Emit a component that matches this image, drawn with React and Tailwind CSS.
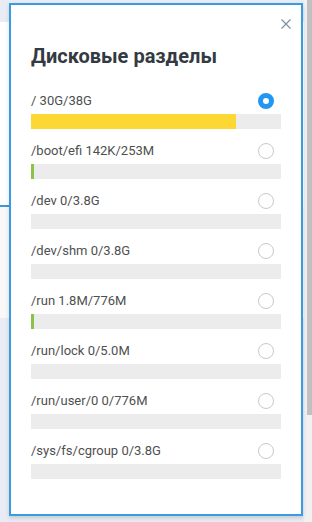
import React from 'react';

const PARTS = [
  { name: '/ 30G/38G', fill: '82%', color: 'bg-[#fdd835]', checked: true },
  { name: '/boot/efi 142K/253M', fill: '3px', color: 'bg-[#8bc34a]' },
  { name: '/dev 0/3.8G', fill: '0' },
  { name: '/dev/shm 0/3.8G', fill: '0' },
  { name: '/run 1.8M/776M', fill: '3px', color: 'bg-[#8bc34a]' },
  { name: '/run/lock 0/5.0M', fill: '0' },
  { name: '/run/user/0 0/776M', fill: '0' },
  { name: '/sys/fs/cgroup 0/3.8G', fill: '0' }
];

// строка раздела
const PartRow = ({ part }) => (
  <div className="mb-[14px]">
    <div className="flex items-center h-4">
      <span className="flex-1 text-[13px] leading-4 text-[#4f4f4f]">{part.name}</span>
      {part.checked ? (
        <span className="w-4 h-4 mr-[7px] rounded-full border-[5px] border-[#2196f3] bg-white" />
      ) : (
        <span className="w-4 h-4 mr-[7px] rounded-full border border-[#c9c9c9] bg-white" />
      )}
    </div>
    <div className="mt-[5px] h-[15px] bg-[#ececec]">
      {part.color && <div className={`h-full ${part.color}`} style={{ width: part.fill }} />}
    </div>
  </div>
);

export default function App() {
  return (
    <div className="relative w-[312px] h-[522px] overflow-hidden flex font-['Roboto','Liberation_Sans',sans-serif]">
      {/* страница под окном */}
      <div className="flex-1 flex flex-col">
        <div className="h-[22px] bg-[#e9ecf4]" />
        <div className="h-[183px] bg-white" />
        <div className="h-[2px] bg-white">
          <div className="w-[10px] h-full bg-[#3a9ad9]" />
        </div>
        <div className="h-[111px] bg-[#f8f8f8]" />
        <div className="flex-1 bg-[#e9ecf4]" />
      </div>
      <div className="w-[8px] bg-[#f1f1f1] flex flex-col items-end">
        <div className="w-[5px] h-[415px] bg-[#c1c1c1]" />
      </div>

      {/* модальное окно */}
      <div className="absolute left-[9px] top-[3px] w-[294px] h-[513px] border-2 border-[#3a9ce0] bg-white shadow-[0_2px_4px_rgba(0,0,0,0.15)] px-5 pt-[37px]">
        <button className="absolute top-[14px] right-[10px] w-[10px] h-[10px] text-[#7d8b99]">
          <svg viewBox="0 0 10 10" width="10" height="10" className="block">
            <path d="M0.5 0.5 L9.5 9.5 M9.5 0.5 L0.5 9.5" stroke="currentColor" strokeWidth="1.1" />
          </svg>
        </button>
        <h2 className="text-[20px] leading-7 font-bold text-[#333a42]">Дисковые разделы</h2>
        <div className="mt-[23px]">
          {PARTS.map((p) => (
            <PartRow key={p.name} part={p} />
          ))}
        </div>
      </div>
    </div>
  );
}
